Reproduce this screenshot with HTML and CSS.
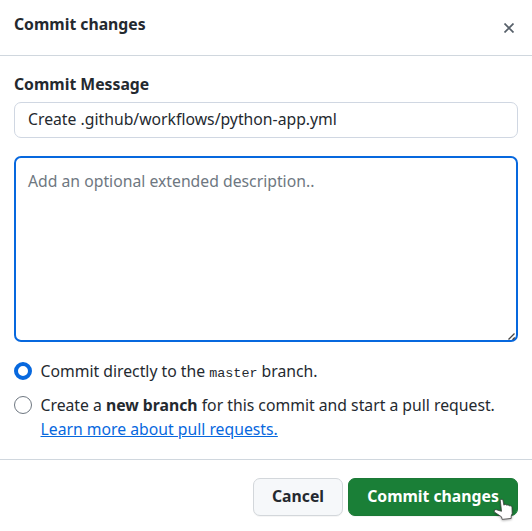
FILE: index.html
```html
<!DOCTYPE html>
<html lang="en">
<head>
<meta charset="utf-8">
<title>Commit changes</title>
<link rel="stylesheet" href="styles.css">
</head>
<body>
<div class="dialog">
  <header class="header">
    <h1 class="title">Commit changes</h1>
    <button class="close" aria-label="Close"><svg width="10" height="10" viewBox="0 0 10 10"><path d="M.5.5l9 9M9.5.5l-9 9" stroke="#57606a" stroke-width="1.7" fill="none"/></svg></button>
  </header>
  <main class="body">
    <label class="label" for="msg">Commit Message</label>
    <input class="input" id="msg" type="text" value="Create .github/workflows/python-app.yml">
    <div class="area-wrap">
      <textarea class="area" placeholder="Add an optional extended description.."></textarea>
      <svg class="grip" width="8" height="8" viewBox="0 0 8 8"><path d="M.5 6.5l6-6M4.5 6.8l2.3-2.3" stroke="#444" stroke-width="1.3" fill="none"/></svg>
    </div>
    <label class="option"><input class="radio" type="radio" name="target" checked><span>Commit directly to the <code class="code">master</code> branch.</span></label>
    <label class="option option-new"><input class="radio" type="radio" name="target"><span>Create a <b>new branch</b> for this commit and start a pull request.<br><a class="link" href="#">Learn more about pull requests.</a></span></label>
  </main>
  <footer class="footer">
    <button class="btn">Cancel</button>
    <button class="btn btn-primary">Commit changes</button>
  </footer>
  <svg class="cursor" width="22" height="24" viewBox="0 0 22 24"><path d="M7.3 2.5C7.3 1 9.8 1 10 2.5L10.9 7.2C11.7 6.1 13.3 6.3 13.7 7.3C14.7 6.6 16 7 16.4 8C17.7 7.5 19 8.3 19 9.7L19.2 15.4L18.2 18V20.4L9.2 21.4L8.5 18.8L1.9 14.4C.6 13.2 1.7 11.3 3.3 11.7L8.5 13.3Z" fill="#fff" stroke="#3c3c3c" stroke-width=".8"/></svg>
</div>
</body>
</html>
```
FILE: styles.css
```css
* { box-sizing: border-box; }
body { margin: 0; background: #fff; }
body, input, textarea, button { font-family: "Noto Sans", sans-serif; font-size: 15.75px; color: #24292f; }
.dialog { position: relative; width: 532px; height: 531px; overflow: hidden; display: flex; flex-direction: column; }
.header { height: 56px; flex: none; display: flex; justify-content: space-between; padding: 12px 18px 0 14px; border-bottom: 1px solid #d0d7de; }
.title { margin: 0; font-size: 15.75px; line-height: 24px; font-weight: 700; }
.close { border: 0; padding: 0; background: none; height: 10px; margin-top: 11px; display: flex; }
.body { flex: none; height: 403px; padding: 16px 14px 0; }
.label { display: block; font-weight: 700; line-height: 24px; margin-bottom: 6px; }
.input { display: block; width: 100%; height: 36px; padding: 0 13px 2px; border: 1px solid #d0d7e2; border-radius: 7px; background: #fff; outline: 0; }
.area-wrap { position: relative; height: 186px; margin-top: 18px; }
.area { display: block; width: 100%; height: 186px; padding: 11px 12px; line-height: 24px; border: 2px solid #0768de; border-radius: 7px; outline: 0; resize: none; }
.area::placeholder { color: #6e7781; }
.grip { position: absolute; right: 2px; bottom: 1px; }
.option { display: flex; gap: 8.5px; line-height: 24px; margin-top: 17px; }
.option-new { margin-top: 10px; }
.radio { appearance: none; flex: none; width: 18px; height: 18px; margin: 3px 0 0; border: 1px solid #6e7781; border-radius: 50%; background: #fff; }
.radio:checked { border: 4.5px solid #0768de; }
.code { font: 13.4px "Liberation Mono", monospace; }
.link { color: #0768de; text-decoration: underline; }
.footer { flex: 1; border-top: 1px solid #d0d7de; padding: 18px 14px 0; display: flex; justify-content: flex-end; align-items: flex-start; gap: 5px; }
.btn { height: 38px; width: 90px; padding: 0 0 2px; border: 1px solid #d3d7db; border-radius: 7px; background: #f6f8fa; font-weight: 700; white-space: nowrap; box-shadow: 0 1px 0 rgba(27,31,36,.04); }
.btn-primary { width: 170px; color: #fff; background: #1a7f37; border-color: #1b7936; }
.cursor { position: absolute; left: 493px; top: 498px; filter: drop-shadow(0 1px 1px rgba(0,0,0,.3)); }
```
